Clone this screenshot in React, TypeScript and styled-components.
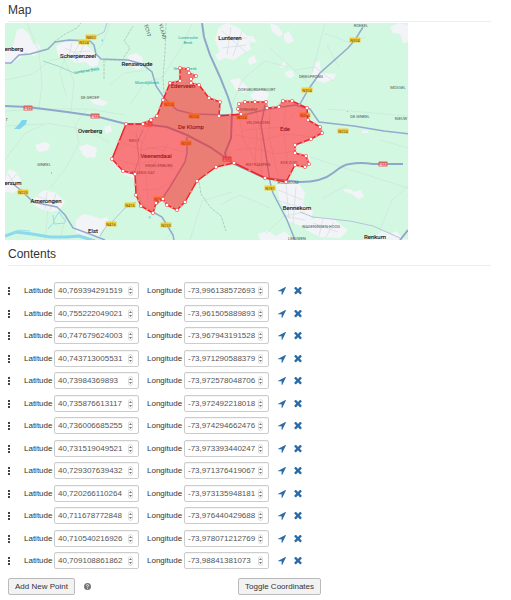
import React, { useState } from "react";
import styled, { createGlobalStyle } from "styled-components";

const GlobalStyle = createGlobalStyle`
  body {
    margin: 0;
    background: #fff;
    color: #333;
    font-family: "Liberation Sans", Arial, sans-serif;
    font-size: 8px;
    line-height: 12px;
  }
`;

const Page = styled.main`
  padding: 3px 20px 5px 5px;
`;

const Section = styled.section`
  & + & {
    margin-top: 7px;
  }
`;

const Heading = styled.h2`
  margin: 0 0 0 3px;
  padding-bottom: 4px;
  border-bottom: 1px solid #eee;
  font-size: 12px;
  line-height: 14px;
  font-weight: 400;
`;

const MapDrawing = styled.svg`
  display: block;
  width: 100%;
  max-width: 403px;
  margin-top: 1px;
  font-family: Roboto, sans-serif;
`;

const PointList = styled.ol`
  list-style: none;
  margin: 16px 0 0 3px;
  padding: 0;
`;

const PointRow = styled.li`
  display: flex;
  align-items: center;
  height: 17px;
  margin-bottom: 5px;

  &:nth-child(odd) {
    margin-bottom: 6px;
  }

  &:last-child {
    margin-bottom: 0;
  }
`;

const Handle = styled.button`
  display: flex;
  flex-direction: column;
  gap: 1px;
  width: 16px;
  padding: 0;
  border: 0;
  background: none;
  cursor: grab;
`;

const Dot = styled.span`
  width: 2px;
  height: 2px;
  background: #444;
`;

const FieldLabel = styled.label<{ $wide?: boolean }>`
  width: ${(p) => (p.$wide ? 37 : 30)}px;
`;

const Field = styled.div`
  box-sizing: border-box;
  display: flex;
  align-items: center;
  width: 85px;
  height: 17px;
  margin-right: 8px;
  padding: 0 5px 0 3px;
  border: 1px solid #ccc;
  border-radius: 2px;
  box-shadow: inset 0 1px 1px #f4f4f4;
`;

const NumberInput = styled.input`
  flex: 1;
  min-width: 0;
  padding: 0;
  border: 0;
  outline: 0;
  background: none;
  color: #555;
  font: inherit;
`;

const Stepper = styled.span`
  display: flex;
  flex-direction: column;
  box-sizing: border-box;
  width: 5px;
  height: 10px;
  border: 1px solid #ddd;
  border-radius: 3px;
`;

const Step = styled.button`
  display: flex;
  flex: 1;
  align-items: center;
  justify-content: center;
  padding: 0;
  border: 0;
  background: none;

  svg {
    width: 3px;
    height: 2px;
    fill: #777;
  }
`;

const IconButton = styled.button`
  display: flex;
  justify-content: center;
  width: 10px;
  margin-right: 6px;
  padding: 0;
  border: 0;
  background: none;
  color: #2a6ca8;
  cursor: pointer;

  svg {
    width: 8px;
    height: 8px;
    fill: currentColor;
  }
`;

const Footer = styled.footer`
  display: flex;
  align-items: center;
  width: 313px;
  max-width: 100%;
  margin: 9px 0 0 3px;
`;

const Button = styled.button`
  box-sizing: border-box;
  height: 17px;
  padding: 0 6px;
  border: 1px solid #bbb;
  border-radius: 2px;
  background: #f2f2f2;
  color: #333;
  font: inherit;
  white-space: nowrap;
`;

const HelpButton = styled.button`
  display: flex;
  margin: 0 auto 0 9px;
  padding: 0;
  border: 0;
  background: none;

  svg {
    width: 7px;
    height: 7px;
  }
`;

type Point = [number, number];

const area: Point[] = [
  [126, 124], [143, 124], [151, 120], [157, 116], [163, 100], [170, 83], [180, 81],
  [180, 68], [188, 69], [189, 73], [196, 76], [191, 79], [191, 83], [199, 85],
  [209, 98], [220, 102], [219, 116], [241, 114], [238, 109], [239, 104], [245, 102],
  [255, 102], [266, 102], [267, 108], [279, 107], [283, 101], [292, 101], [307, 108],
  [308, 120], [320, 127], [322, 133], [311, 139], [295, 145], [295, 153], [306, 156],
  [309, 164], [305, 167], [295, 165], [286, 182], [265, 178], [234, 163], [216, 167],
  [197, 181], [185, 202], [177, 210], [167, 205], [163, 199], [156, 203], [153, 213],
  [141, 206], [136, 195], [135, 174], [123, 171], [112, 159],
];

const midpoints: Point[] = area.map(([x, y], i) => {
  const [nx, ny] = area[(i + 1) % area.length];
  return [(x + nx) / 2, (y + ny) / 2];
});

const towns = [
  "M5 50l8-4 4-16 5-2 7 6 4 10 6 8-5 4-9-4-4 6-9 5-7 1z",
  "M32 45l5-2 4 5-4 3zM56 46l8-4 20 1 8 7 7 8-1 7-7 2-5-5-10 1-9-6-9-1z",
  "M128 56l8-3 6 4 1 8-5 5-7-4-5 1z",
  "M215 40l4-13 8-4 12 5 9 9 3 12-7 4-10 7-12-3zM247 36l6 0 4 7-7-1z",
  "M215 55l10-6 3 7-9 5zM247 60l7-5 3 7-7 3z",
  "M270 23l8 3 5 8-4 3-7-6zM284 34l5-3 5 10-6 3-4-4zM280 67l5-7 1 7-3 1zM285 72l7-2 3 6-5 2-4-2z",
  "M311 75l5-13 4-1 1 12 15 1-2 5-10 4-8-3z",
  "M390 27l9-4 9 2v17l-5 1-3-9-7-1z",
  "M35 145l10-3 5 2-2 6-8 2-3-2zM79 147l8-3 10 4-2 10-5-1-3 1-5-4z",
  "M5 180l4-11 7 3 5 8-2 10-6 3-8-1z",
  "M32 200l7-6 5-4 12 3 9 9-6 8-8 2-10-3-7-4z",
  "M76 220l7-6 9 2 9 3 6-2 3 9-9 5-3 7-22-5z",
  "M90 100l3-3 15 5-4 4-10-2zM104 127l6-2 2 6-6 3z",
  "M276 185l10-3 13 2 6 9-2 12 10 5-2 12-10 4-13-5-3-12-5-7-2-9z",
  "M305 221l14-4 16 3 13 10-8 8-20-1-14-7zM258 234l10-3 8 5 9-5 8 9h-33z",
  "M343 189l7 0 4 3 7-2 3 7-6 2-6-5-7-2zM376 236l7-6 8 4 5-3 7 7 5 2h-34z",
  "M230 80l9-2 9 10-3 5-9-3zM250 95l10-6 9 4-2 7-12 2zM362 130l6 1v2h-6z",
];

const builtUp = [
  "M126 124l17 1 8-3 13 3 20 10 2 20-6 18-10 17-10 12-8 8-10-8-5-22-16-7-10-13z",
  "M228 120l15-3 30-9 19-5 13 5 3 12 13 8v6l-25 11v7l13 3 2 9-16 0-9 16-24-4-29-15-4-16z",
];

const streets = [
  "M5 80l28-6 18-14 21-3 8-15M27 23l12 29 3 32-3 24M66 95l-6-22 5-15M71 112l3-31-12-26M5 111l38-2 45 0 37 6",
  "M50 188l16-20 13-25-4-18 11-15M5 160l20-27 22-10 40 7 23 13M45 240l3-30M60 240l6-24",
  "M110 23l-8 22-7 7M130 105l14-22 18-5 22-35 8-20M110 85l14-12 24-3M230 110l12-30 23-19 22 6M270 48l43 39",
  "M325 23l-13 50M324 33l24 9 18-5M327 45l12 22M295 70l20-3 18 14M408 116l-80-7M310 157l98 31M322 199l25-14M408 186l-16 14-12 30",
  "M220 205l20-10 30 13M190 240l12-39 30-9M305 212l-21 4-18 18M175 228l-10 12M380 140l28 8M5 126l38-2",
];

const townStreets = [
  "M121 142l21 8 20-4 22 6M119 160l17 5 15-4 23 8M136 130l3 34-4 30M151 124l-9 18-3 35M142 190l17-1 19-12M148 200l-2-25 22-31M129 130l18 17 20 4",
  "M240 120l3 18 19 35M256 111l5 25 1 39M270 109l-1 27 9 40M235 135l28 5 23-6 28 3M234 150l20-2 23 6 19-3M286 107l-3 20 5 40M249 119l8 12-2 33M295 113l-13 14-38 3",
  "M65 48l22 11M72 43l-3 14M84 44l-7 17M91 51l-16 1M222 31l25 22M231 27l-4 28M242 31l-9 25M219 40l28-2M222 48l24-3",
  "M278 190l25 10M286 184l3 35M296 187l-3 38M276 200l27 8M284 216l21 4M313 223l25 9M323 219l-4 17M334 222l-8 15M8 174l9 14M17 174l-12 12M37 196l20 8M47 192l-2 17M56 194l-6 16",
];

const minorRoads = [
  "M5 63h6l8-8 11-1 18-5 7-7 14-2 21 1 4 4 2 9 5 5 27 1 14 4 10 8 4 14 9 13 12 11 16 4 37 1 14 0 24-6 27-4 15 4 9 13 35 4 30 5 35 4",
  "M363 27l-8 13-7 8-28 25-12 17-8 14",
  "M13 184l9 7 11 11 24 5 8 8 8 13 14 5 18 7",
  "M153 212l9 5 5 8 6 10 1 5M156 205l6-6 8-12 15-25 2-9v-16",
  "M270 182l3 11 14 27 8 20M265 105l-4 20 5 30 4 27",
];

const thinRoads = [
  "M100 236l5-8 7-6 13-14 11-6",
  "M300 212l13 5 37 4 23 5 27 12",
  "M107 23l-3 9-10 5M143 130l-6 13 2 15-5 16",
];

const motorways = [
  "M5 106l23 1 39 5 28 4 31 8 17 0 24 3 20 8 23 12 13 9 11 8 31 14 35 4q22 0 33-9t17-9q10-2 23 0l30 0",
  "M202 23l2 14 6 18 10 22 8 20 4 13-1 28-6 15 2 8",
  "M400 240l8-10",
];

type Tag = { x: number; y: number; text: string; kind?: "red" };

const roadTags: Tag[] = [
  { x: 91, y: 37, text: "N802" },
  { x: 84, y: 42, text: "N224" },
  { x: 28, y: 108, text: "A12", kind: "red" },
  { x: 95, y: 116, text: "A12", kind: "red" },
  { x: 355, y: 40, text: "N304" },
  { x: 307, y: 90, text: "N304" },
  { x: 343, y: 131, text: "N224" },
  { x: 383, y: 164, text: "A12", kind: "red" },
  { x: 23, y: 192, text: "N225" },
  { x: 130, y: 205, text: "N416" },
  { x: 111, y: 224, text: "N416" },
  { x: 166, y: 225, text: "N233" },
  { x: 270, y: 188, text: "N781" },
  { x: 169, y: 104, text: "N224" },
  { x: 194, y: 116, text: "N224" },
  { x: 242, y: 117, text: "N224" },
  { x: 305, y: 115, text: "N224" },
  { x: 186, y: 143, text: "N233" },
  { x: 159, y: 199, text: "N233" },
  { x: 148, y: 124, text: "A12", kind: "red" },
  { x: 227, y: 159, text: "A12", kind: "red" },
];

type Place = { x: number; y: number; text: string };

const places: Place[] = [
  { x: 14, y: 51, text: "enberg" },
  { x: 78, y: 58, text: "Scherpenzeel" },
  { x: 137, y: 66, text: "Renswoude" },
  { x: 230, y: 40, text: "Lunteren" },
  { x: 90, y: 133, text: "Overberg" },
  { x: 183, y: 88, text: "Ederveen" },
  { x: 191, y: 129, text: "De Klomp" },
  { x: 156, y: 158, text: "Veenendaal" },
  { x: 285, y: 131, text: "Ede" },
  { x: 13, y: 185, text: "ersum" },
  { x: 46, y: 203, text: "Amerongen" },
  { x: 93, y: 233, text: "Elst" },
  { x: 297, y: 210, text: "Bennekom" },
  { x: 375, y: 239, text: "Renkum" },
];

const hamlets: Place[] = [
  { x: 90, y: 99, text: "DE GROEP" },
  { x: 44, y: 166, text: "GINKEL" },
  { x: 361, y: 27, text: "ROEKEL" },
  { x: 311, y: 78, text: "DRIESPRONG" },
  { x: 257, y: 91, text: "DOESBURGERBUURT" },
  { x: 398, y: 89, text: "MOSSEL" },
  { x: 360, y: 118, text: "DE GINKEL" },
  { x: 401, y: 120, text: "NIEUW" },
  { x: 134, y: 142, text: "WEST" },
  { x: 159, y: 167, text: "ENGELENBURG" },
  { x: 142, y: 174, text: "SPAANSE GAT" },
  { x: 248, y: 111, text: "KERNHEM" },
  { x: 258, y: 124, text: "VELDHUIZEN" },
  { x: 258, y: 166, text: "RIETKAMPEN" },
  { x: 289, y: 164, text: "EDE-ZUID" },
  { x: 288, y: 184, text: "HOEKELUM" },
  { x: 321, y: 228, text: "WAGENINGEN-HOOG" },
  { x: 297, y: 240, text: "LEEUWEN" },
];

const waters: Place[] = [
  { x: 188, y: 39, text: "Luntersche" },
  { x: 188, y: 44, text: "Beek" },
  { x: 185, y: 70, text: "Veenderbeek" },
  { x: 147, y: 84, text: "Moerdijkbeek" },
];

function AreaMap() {
  return (
    <MapDrawing viewBox="5 23 403 217" role="img" aria-label="Map of the selected area">
      <rect x="5" y="23" width="403" height="217" fill="#d3f8e2" />
      {towns.map((d) => <path key={d} d={d} fill="#f2f4f7" />)}
      {builtUp.map((d) => <path key={d} d={d} fill="#f0f0f5" />)}
      <g fill="none">
        {streets.map((d) => <path key={d} d={d} stroke="#c8e2d7" strokeWidth=".6" />)}
        {townStreets.map((d) => <path key={d} d={d} stroke="#d5dbe3" strokeWidth=".7" />)}
        <path d="M5 236l11-4 16 2 18 3 17 0 12-1 16 5" stroke="#8bd9ed" strokeWidth="3" />
        <path d="M14 233l4-3 12 1M53 215l1 9 11-1M54 220l5-8 7 10M48 229l7-8" stroke="#99ddec" strokeWidth="1" />
        <path d="M43 61l15 5 16 7 24-5" stroke="#89c9bd" strokeWidth=".7" />
        <path d="M104 79l0-19 18 0 8-12-6-7 9-15M166 23l-1 29-2 25 1 16M54 42l11-8 12-6 4-5M199 182l2 12 9 13 11 9 5 15" stroke="#9dbfb4" strokeWidth=".7" strokeDasharray="3 1" />
        {thinRoads.map((d) => <path key={d} d={d} stroke="#b2c6d8" strokeWidth="1" />)}
        {minorRoads.map((d) => <path key={d} d={d} stroke="#93abcc" strokeWidth="1.5" />)}
        {motorways.map((d) => <path key={d} d={d} stroke="#8fa7ca" strokeWidth="2" />)}
      </g>
      <path d="M14 129l5-5 3-4 5 0-1 4-6 5zM101 40l2-1 0 3zM347 111h1v1h-1zM51 172h1v2h-1zM148 217l3-1-1 3z" fill="#81d4ee" />
      {roadTags.map(({ x, y, text, kind }) => {
        const w = kind ? 9 : 11;
        return (
          <g key={`${x}-${y}`}>
            <rect x={x - w / 2} y={y - 2.5} width={w} height="5" rx=".6" fill={kind ? "#dc6266" : "#f2cb35"} />
            <text x={x} y={y + 1.5} fontSize="4" textAnchor="middle" fill={kind ? "#fff" : "#665421"}>
              {text}
            </text>
          </g>
        );
      })}
      <g textAnchor="middle">
        {places.map(({ x, y, text }) => (
          <text key={text} x={x} y={y} fontSize="6" fill="#1c2228" stroke="#1c2228" strokeWidth=".15">
            {text}
          </text>
        ))}
        {hamlets.map(({ x, y, text }) => (
          <text key={text} x={x} y={y} fontSize="4" fill="#4c5858">{text}</text>
        ))}
        {waters.map(({ x, y, text }) => (
          <text key={text} x={x} y={y} fontSize="4" fill="#16a5a7">{text}</text>
        ))}
        <text fontSize="4" fill="#16a5a7" transform="translate(87 72) rotate(-8)">Lunterse Beek</text>
        <text fontSize="5" fill="#455" transform="translate(146 31) rotate(75)">ECHT</text>
        <text fontSize="5" fill="#455" transform="translate(161 32) rotate(75)">VLAND</text>
      </g>
      <text x="6" y="121" fontSize="5" fill="#566">r</text>
      <polygon points={area.map((p) => p.join()).join(" ")} fill="#ff1a1a" fillOpacity=".55" stroke="#ef2428" strokeWidth="1.5" strokeLinejoin="round" />
      {midpoints.map(([x, y], i) => (
        <circle key={i} cx={x} cy={y} r="1.2" fill="#fff" fillOpacity=".5" stroke="#ef2428" strokeWidth=".4" strokeOpacity=".6" />
      ))}
      {area.map(([x, y], i) => (
        <circle key={i} cx={x} cy={y} r="1.7" fill="#fff" stroke="#ee3b3e" strokeWidth=".6" />
      ))}
    </MapDrawing>
  );
}

const initialPoints = [
  ["40,769394291519", "-73,996138572693"],
  ["40,755222049021", "-73,961505889893"],
  ["40,747679624003", "-73,967943191528"],
  ["40,743713005531", "-73,971290588379"],
  ["40,73984369893", "-73,972578048706"],
  ["40,735876613117", "-73,972492218018"],
  ["40,736006685255", "-73,974294662476"],
  ["40,731519049521", "-73,973393440247"],
  ["40,729307639432", "-73,971376419067"],
  ["40,720266110264", "-73,973135948181"],
  ["40,711678772848", "-73,976440429688"],
  ["40,710540216926", "-73,978071212769"],
  ["40,709108861862", "-73,98841381073"],
];

type CoordinateProps = { id: string; label: string; value: string; wide?: boolean };

function Coordinate({ id, label, value, wide }: CoordinateProps) {
  return (
    <>
      <FieldLabel htmlFor={id} $wide={wide}>{label}</FieldLabel>
      <Field>
        <NumberInput id={id} type="text" inputMode="decimal" defaultValue={value} />
        <Stepper>
          <Step type="button" aria-label={`Increase ${label}`}>
            <svg viewBox="0 0 3 2"><path d="M0 2L1.5 0 3 2z" /></svg>
          </Step>
          <Step type="button" aria-label={`Decrease ${label}`}>
            <svg viewBox="0 0 3 2"><path d="M0 0h3L1.5 2z" /></svg>
          </Step>
        </Stepper>
      </Field>
    </>
  );
}

export default function App() {
  const [points, setPoints] = useState(initialPoints);
  const [visible, setVisible] = useState(true);

  return (
    <>
      <GlobalStyle />
      <Page>
        <Section>
          <Heading>Map</Heading>
          <AreaMap />
        </Section>
        <Section>
          <Heading>Contents</Heading>
          {visible && (
            <PointList>
              {points.map(([lat, lng], i) => (
                <PointRow key={`${i}${lat}`}>
                  <Handle type="button" aria-label="Reorder point">
                    <Dot />
                    <Dot />
                    <Dot />
                  </Handle>
                  <Coordinate id={`lat-${i}`} label="Latitude" value={lat} />
                  <Coordinate id={`lng-${i}`} label="Longitude" value={lng} wide />
                  <IconButton type="button" aria-label="Locate point">
                    <svg viewBox="190 250 1420 1420">
                      <path d="M1593 349l-640 1280q-17 35-57 35-5 0-15-2-22-5-35.500-22.500t-13.500-39.500v-576h-576q-22 0-39.500-13.500t-22.500-35.500 4-42 29-30l1280-640q13-7 29-7 27 0 45 19 15 14 18.500 34.500t-6.500 39.500z" />
                    </svg>
                  </IconButton>
                  <IconButton
                    type="button"
                    aria-label="Remove point"
                    onClick={() => setPoints(points.filter((_, n) => n !== i))}
                  >
                    <svg viewBox="260 390 1270 1270">
                      <path d="M1490 1322q0 40-28 68l-136 136q-28 28-68 28t-68-28l-294-294-294 294q-28 28-68 28t-68-28l-136-136q-28-28-28-68t28-68l294-294-294-294q-28-28-28-68t28-68l136-136q28-28 68-28t68 28l294 294 294-294q28-28 68-28t68 28l136 136q28 28 28 68t-28 68l-294 294 294 294q28 28 28 68z" />
                    </svg>
                  </IconButton>
                </PointRow>
              ))}
            </PointList>
          )}
          <Footer>
            <Button type="button" onClick={() => setPoints([...points, ["", ""]])}>Add New Point</Button>
            <HelpButton type="button" aria-label="Help">
              <svg viewBox="0 0 14 14">
                <circle cx="7" cy="7" r="7" fill="#777" />
                <path d="M4.800 5.200Q5 3.200 7 3.200T9.200 5.100Q9.200 6.400 7 7.300V8.300M7 9.700v1.700" fill="none" stroke="#fff" strokeWidth="1.700" />
              </svg>
            </HelpButton>
            <Button type="button" onClick={() => setVisible(!visible)}>Toggle Coordinates</Button>
          </Footer>
        </Section>
      </Page>
    </>
  );
}
